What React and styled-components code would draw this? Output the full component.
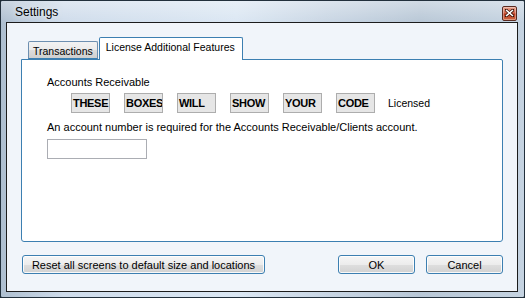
import React from "react";
import styled, { createGlobalStyle } from "styled-components";

const Global = createGlobalStyle`
  html, body { margin: 0; padding: 0; background: #1e2a36; }
  body { font-family: "Liberation Sans", Arial, sans-serif; font-size: 11px; color: #000; }
  * { box-sizing: border-box; }
`;

const Window = styled.div`
  width: 525px;
  height: 298px;
  display: flex;
  flex-direction: column;
  border: 1px solid #22303c;
  border-radius: 2px;
  background:
    linear-gradient(to bottom, rgba(255,255,255,0.35), rgba(255,255,255,0) 22px),
    linear-gradient(to right, #aebfd0 0%, #cfdceb 12%, #dbe7f3 45%, #c9d6e4 62%, #b8c7d6 80%, #c5d3e1 100%);
  overflow: hidden;
`;

const TitleBar = styled.div`
  height: 21px;
  flex: none;
  display: flex;
  align-items: center;
  justify-content: space-between;
  padding: 1px 7px 0 14px;
`;

const Title = styled.span`
  font-size: 12px;
  color: #000;
  text-shadow: 0 0 6px rgba(255,255,255,0.9);
`;

const CloseButton = styled.div`
  width: 15px;
  height: 15px;
  margin-top: 2px;
  border: 1px solid #5a2a20;
  border-radius: 2px;
  background: linear-gradient(to bottom, #e6a28e 0%, #d2664b 45%, #b8381c 55%, #cf6a45 100%);
  display: flex;
  align-items: center;
  justify-content: center;
  box-shadow: inset 0 0 0 1px rgba(255,255,255,0.35);
`;

const Client = styled.div`
  flex: 1;
  margin: 0 6px 5px 5px;
  border: 1px solid #1c1c1c;
  background: #f1f5fa;
  display: flex;
  flex-direction: column;
  padding: 14px 14px 0 14px;
`;

const TabStrip = styled.div`
  display: flex;
  align-items: flex-end;
  height: 22px;
  padding-left: 7px;
  position: relative;
  z-index: 1;
`;

const Tab = styled.div`
  height: ${p => (p.$active ? "23px" : "18px")};
  margin-bottom: ${p => (p.$active ? "-1px" : "0")};
  padding: ${p => (p.$active ? "3px 7px 0 6px" : "3px 4px 0 4px")};
  margin-left: ${p => (p.$active ? "1px" : "0")};
  border: 1px solid ${p => (p.$active ? "#3c7fb1" : "#6d8fb0")};
  border-bottom: ${p => (p.$active ? "none" : "1px solid #3c7fb1")};
  border-radius: 2px 2px 0 0;
  background: ${p =>
    p.$active
      ? "#ffffff"
      : "linear-gradient(to bottom, #f2f2f2 0%, #ebebeb 50%, #dddddd 51%, #cfcfcf 100%)"};
  font-size: 10.5px;
  white-space: nowrap;
`;

const Panel = styled.div`
  height: 183px;
  border: 1px solid #3c7fb1;
  border-radius: 0 2px 3px 3px;
  background: #ffffff;
  padding: 16px 25px 0 25px;
  display: flex;
  flex-direction: column;
`;

const Label = styled.div`
  font-size: 11px;
  line-height: 13px;
`;

const CodeRow = styled.div`
  display: flex;
  align-items: center;
  gap: 14px;
  margin-top: 4px;
  padding-left: 24px;
`;

const CodeBox = styled.div`
  width: 39px;
  height: 20px;
  border: 1px solid #adadad;
  background: #e6e6e6;
  font-weight: bold;
  font-size: 11px;
  letter-spacing: -0.3px;
  line-height: 18px;
  padding-left: 1px;
  white-space: nowrap;
  overflow: hidden;
`;

const Status = styled.span`
  margin-left: -1px;
  font-size: 10.5px;
`;

const Description = styled.div`
  margin-top: 8px;
  font-size: 11px;
  line-height: 13px;
`;

const TextInput = styled.input`
  margin-top: 5px;
  width: 100px;
  height: 20px;
  border: 1px solid #abadb3;
  background: #fff;
  padding: 0 3px;
  font: inherit;
  outline: none;
`;

const ButtonRow = styled.div`
  display: flex;
  align-items: center;
  margin-top: 13px;
  padding-left: 1px;
`;

const Button = styled.button`
  height: 19px;
  width: ${p => p.$w}px;
  margin-left: ${p => p.$ml || 0}px;
  border: 1px solid #3c7fb1;
  border-radius: 3px;
  background: linear-gradient(to bottom, #f6f6f6 0%, #ececec 50%, #dedede 51%, #d2d2d2 100%);
  box-shadow: inset 0 0 0 1px rgba(255,255,255,0.85);
  font-family: "Liberation Sans", Arial, sans-serif;
  font-size: 11px;
  color: #000;
  padding: 0;
  white-space: nowrap;
`;

const Spacer = styled.div`
  flex: 1;
`;

const codes = ["THESE", "BOXES", "WILL", "SHOW", "YOUR", "CODE"];

export default function App() {
  return (
    <>
      <Global />
      <Window>
        <TitleBar>
          <Title>Settings</Title>
          <CloseButton>
            <svg width="9" height="8" viewBox="0 0 9 8">
              <path d="M1 1 L8 7 M8 1 L1 7" stroke="#3a1208" strokeWidth="3" strokeLinecap="square" />
              <path d="M1 1 L8 7 M8 1 L1 7" stroke="#ffffff" strokeWidth="1.6" />
            </svg>
          </CloseButton>
        </TitleBar>
        <Client>
          <TabStrip>
            <Tab>Transactions</Tab>
            <Tab $active>License Additional Features</Tab>
          </TabStrip>
          <Panel>
            <Label>Accounts Receivable</Label>
            <CodeRow>
              {codes.map(c => (
                <CodeBox key={c}>{c}</CodeBox>
              ))}
              <Status>Licensed</Status>
            </CodeRow>
            <Description>
              An account number is required for the Accounts Receivable/Clients account.
            </Description>
            <TextInput type="text" />
          </Panel>
          <ButtonRow>
            <Button $w={243}>Reset all screens to default size and locations</Button>
            <Spacer />
            <Button $w={77}>OK</Button>
            <Button $w={77} $ml={11}>Cancel</Button>
          </ButtonRow>
        </Client>
      </Window>
    </>
  );
}
